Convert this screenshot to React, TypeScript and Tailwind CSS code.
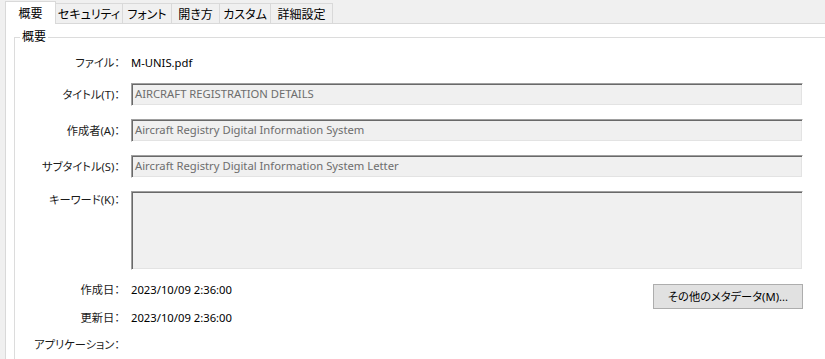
import React from "react";

const font = {
  fontFamily: '"Noto Sans", "Noto Sans CJK JP", sans-serif',
};

const tabs = [
  { label: "セキュリティ", w: "w-[67px]" },
  { label: "フォント", w: "w-[49px]" },
  { label: "開き方", w: "w-[48px]" },
  { label: "カスタム", w: "w-[51px]" },
  { label: "詳細設定", w: "w-[62px]" },
];

const boxClass =
  "w-[672px] bg-[#f0f0f0] border border-t-[#a0a0a0] border-l-[#a0a0a0] border-b-white border-r-white shadow-[inset_1px_1px_0_#696969,inset_-1px_-1px_0_#e3e3e3] pl-[3px] text-[#6d6d6d] truncate";

const Label = ({ children }: { children: React.ReactNode }) => (
  <div className="w-[106px] shrink-0 text-right pr-[1px] text-[#1a1a1a]">
    {children}
  </div>
);

const Field = ({ label, value }: { label: string; value: string }) => (
  <div className="flex items-center gap-[10px] mt-[13px]">
    <Label>{label}</Label>
    <div className={`${boxClass} h-[23px] leading-[20px]`}>{value}</div>
  </div>
);

export default function App() {
  return (
    <div
      className="w-[825px] h-[359px] overflow-hidden bg-[#f0f0f0] pl-[5px] text-[11.25px] leading-[16px] text-black [font-feature-settings:'palt']"
      style={font}
    >
      <div className="flex items-end h-[23px] text-[12px]">
        <div className="relative z-10 -mb-px h-[23px] w-[51px] bg-white border border-b-0 border-[#d9d9d9] flex justify-center pt-[4px]">
          概要
        </div>
        {tabs.map((t) => (
          <div
            key={t.label}
            className={`${t.w} h-[20px] border-t border-r border-[#d9d9d9] bg-[#f0f0f0] flex justify-center pt-[3px] text-black`}
          >
            {t.label}
          </div>
        ))}
      </div>

      <div className="bg-white border-t border-l border-[#d9d9d9] h-[336px] pl-[8px] pt-[5px]">
        <fieldset className="border-t border-l border-[#dcdcdc] h-[400px]">
          <legend className="ml-[5px] px-[2px] text-black text-[12px]">概要</legend>

          <div className="flex items-center gap-[10px] mt-[10px] h-[16px]">
            <Label>ファイル：</Label>
            <div className="text-black">M-UNIS.pdf</div>
          </div>

          <div className="flex items-center gap-[10px] mt-[12px]">
            <Label>タイトル(T)：</Label>
            <div className={`${boxClass} h-[23px] leading-[20px]`}>
              AIRCRAFT REGISTRATION DETAILS
            </div>
          </div>
          <Field
            label="作成者(A)："
            value="Aircraft Registry Digital Information System"
          />
          <Field
            label="サブタイトル(S)："
            value="Aircraft Registry Digital Information System Letter"
          />

          <div className="flex items-start gap-[10px] mt-[13px]">
            <div className="pt-[1px]">
              <Label>キーワード(K)：</Label>
            </div>
            <div className={`${boxClass} h-[79px]`} />
          </div>

          <div className="flex items-start gap-[10px] mt-[12px] h-[16px]">
            <Label>作成日：</Label>
            <div className="w-[672px] flex justify-between">
              <span>2023/10/09 2:36:00</span>
              <button className="mt-[2px] w-[150px] h-[25px] bg-[#e1e1e1] border border-[#adadad] text-black">
                その他のメタデータ(M)...
              </button>
            </div>
          </div>

          <div className="flex items-center gap-[10px] mt-[12px] h-[16px]">
            <Label>更新日：</Label>
            <span>2023/10/09 2:36:00</span>
          </div>

          <div className="flex items-center gap-[10px] mt-[11px] h-[16px]">
            <Label>アプリケーション：</Label>
          </div>
        </fieldset>
      </div>
    </div>
  );
}
